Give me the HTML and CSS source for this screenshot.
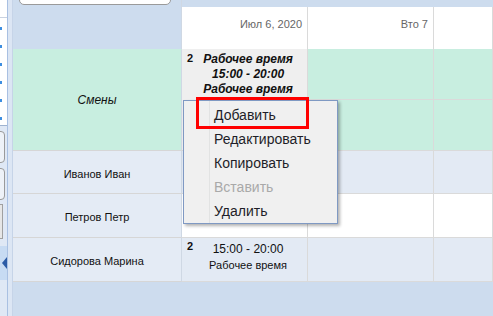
FILE: index.html
```html
<!DOCTYPE html>
<html lang="ru">

<head>
  <meta charset="utf-8">
  <title>Смены</title>
  <link rel="stylesheet" href="styles.css">
</head>

<body>
  <div class="app">
    <div class="side">
      <div class="side-top"></div>
      <div class="side-list">
        <i></i><i></i><i></i><i></i><i></i><i></i>
      </div>
      <div class="side-btn"></div>
      <div class="side-btn"></div>
      <div class="side-box"></div>
      <div class="side-tab"><span class="arrow"></span></div>
    </div>
    <div class="rail"></div>

    <div class="scheduler">
      <div class="corner"><div class="search-box"></div></div>
      <div class="day-head">Июл 6, 2020</div>
      <div class="day-head">Вто 7</div>
      <div class="day-head"></div>

      <div class="res res-group">Смены</div>
      <div class="cell">
        <div class="event">
          <span class="ev-num">2</span>
          <div class="ev-text ev-bold">
            <div>Рабочее время</div>
            <div>15:00 - 20:00</div>
            <div>Рабочее время</div>
          </div>
        </div>
      </div>
      <div class="cell cell-split"><div class="slot"></div><div class="slot"></div></div>
      <div class="cell cell-split"><div class="slot"></div><div class="slot"></div></div>

      <div class="res">Иванов Иван</div>
      <div class="cell alt"></div>
      <div class="cell alt"></div>
      <div class="cell alt"></div>

      <div class="res">Петров Петр</div>
      <div class="cell"></div>
      <div class="cell"></div>
      <div class="cell"></div>

      <div class="res">Сидорова Марина</div>
      <div class="cell alt">
        <div class="event event-plain">
          <span class="ev-num">2</span>
          <div class="ev-text">
            <div class="ev-time">15:00 - 20:00</div>
            <div>Рабочее время</div>
          </div>
        </div>
      </div>
      <div class="cell alt"></div>
      <div class="cell alt"></div>
    </div>
  </div>

  <ul class="context-menu">
    <li>Добавить</li>
    <li>Редактировать</li>
    <li>Копировать</li>
    <li class="disabled">Вставить</li>
    <li>Удалить</li>
  </ul>
  <div class="highlight"></div>
</body>

</html>
```

FILE: styles.css
```css
body {
  margin: 0;
  width: 493px;
  height: 316px;
  overflow: hidden;
  font-family: "Liberation Sans", Arial, sans-serif;
  font-size: 11px;
  color: #111;
  background: #cddcee;
}

.app {
  display: flex;
  height: 316px;
}

/* left tool strip, mostly cut off */
.side {
  width: 7px;
  flex: none;
  background: #dfe8f5;
  border-right: 1px solid #a9c0e2;
  overflow: hidden;
}

.side-top {
  height: 17px;
  background: #fff;
  border-bottom: 1px solid #c9d2e0;
}

.side-list {
  height: 108px;
  background: #fff;
  border-bottom: 1px solid #9fb3d0;
  display: flex;
  flex-direction: column;
  gap: 15px;
  padding-top: 9px;
  box-sizing: border-box;
}

.side-list i {
  display: block;
  width: 2px;
  height: 3px;
  background: #3d8ee0;
}

.side-btn {
  width: 10px;
  height: 30px;
  margin: 5px 0 4px -7px;
  border: 1px solid #9a9a9a;
  border-radius: 4px;
  background: #eef2f8;
}

.side-box {
  width: 10px;
  height: 33px;
  margin: 4px 0 0 -9px;
  border: 1px solid #a0a0a0;
  background: #e6e6e6;
}

.side-tab {
  height: 34px;
  margin-top: 7px;
  background: #c7dbf3;
  display: flex;
  align-items: center;
  padding-left: 2px;
}

.arrow {
  width: 0;
  height: 0;
  border-top: 6px solid transparent;
  border-bottom: 6px solid transparent;
  border-right: 5px solid #2b5ba6;
}

.rail {
  width: 4px;
  flex: none;
  background: #dce6f4;
  border-right: 1px solid #c6d4e8;
}

/* scheduler grid */
.scheduler {
  flex: 1;
  display: grid;
  grid-template-columns: 169px 126px 126px 1fr;
  grid-template-rows: 49px 102px 43px 44px 44px;
  align-content: start;
}

.corner {
  background: #cddcee;
  border-right: 1px solid #cfd8e4;
}

.search-box {
  height: 10px;
  margin: -7px 10px 0 6px;
  background: #fff;
  border: 1px solid #9a9a9a;
  border-radius: 0 0 5px 5px;
}

.day-head {
  margin-top: 7px;
  background: #fff;
  border-right: 1px solid #dadada;
  text-align: right;
  padding: 10px 5px 0 0;
  line-height: 14px;
  color: #666;
}

.res {
  display: flex;
  align-items: center;
  justify-content: center;
  padding-top: 3px;
  box-sizing: border-box;
  background: #e4ebf5;
  border-bottom: 1px solid #d6d6d6;
  border-right: 1px solid #cfd8e4;
}

.res-group {
  padding-top: 0;
  background: #c8eee0;
  font-size: 12px;
  font-style: italic;
  border-top: 1px solid #c8eee0;
}

.cell {
  background: #fff;
  border-right: 1px solid #dadada;
  border-bottom: 1px solid #dadada;
}

.cell.alt {
  background: #e3eaf4;
}

.cell-split {
  display: flex;
  flex-direction: column;
}

.slot {
  flex: 1;
  background: #c8eee0;
}

.slot + .slot {
  border-top: 1px solid #dadada;
}

.event {
  display: flex;
  height: 100%;
  background: #efefef;
  padding: 3px 4px 0 5px;
  box-sizing: border-box;
}

.event-plain {
  background: transparent;
  padding-top: 2px;
}

.ev-num {
  font-size: 11px;
  font-weight: bold;
  line-height: 12px;
}

.ev-text {
  flex: 1;
  text-align: center;
  line-height: 15px;
}

.ev-bold {
  font-size: 12px;
  font-weight: bold;
  font-style: italic;
}

.event-plain .ev-text {
  line-height: 16px;
  padding-top: 1px;
}

.ev-time {
  font-size: 12px;
}

/* context menu */
.context-menu {
  position: absolute;
  left: 183px;
  top: 100px;
  width: 155px;
  height: 124px;
  box-sizing: border-box;
  margin: 0;
  padding: 2px 0 0;
  list-style: none;
  background: #f0f0f0 linear-gradient(#e2e3e3, #e2e3e3) no-repeat 25px 0 / 1px 100%;
  border: 1px solid #7f99c3;
  box-shadow: 2px 2px 3px rgba(0, 0, 0, 0.3);
  font-size: 14px;
  color: #1e1e28;
}

.context-menu li {
  height: 24px;
  line-height: 24px;
  padding-left: 30px;
}

.context-menu li.disabled {
  color: #a9a9a9;
}

.highlight {
  position: absolute;
  left: 196px;
  top: 97px;
  width: 113px;
  height: 32px;
  box-sizing: border-box;
  border: 3px solid #f00;
}
```
